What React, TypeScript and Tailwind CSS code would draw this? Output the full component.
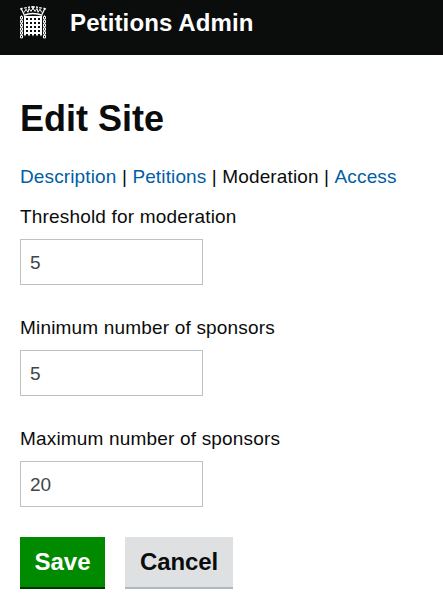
import React, { useState } from "react";

const barXs = [4, 8, 12, 16, 20];
const barYs = [10, 14, 18, 22, 26];
const linkYs = [10, 13.8, 17.6, 21.4, 25.2, 29];

function Portcullis() {
  return (
    <svg className="block h-[33px] w-[27px]" viewBox="0 0 27 33" fill="#fff" aria-hidden="true">
      <g fill="none" stroke="#fff">
        <path d="M3.6 9.2Q13 5.8 22.4 9.2" strokeWidth="1.5" />
        <path d="M4 8.5L1.4 3M22 8.5L24.6 3" strokeWidth="1.3" />
        <path d="M4.2 6.5L6 3.2l2 3.2M8 6.2l1-3.8L11 5.6M11 5.2l2-3 2 3M15 5.6l2-3.2 1 3.8M18 6.4l2-3.2 1.8 3.3" strokeWidth="1" />
        <path d="M0 3.2l2.6-1M26 3.2l-2.6-1M4.2 2.2l2.6-.5M21.8 2.2l-2.6-.5M8 1.3l2-.3M18 1.3l-2-.3M11.2 1h3.6M13 0v3.5" strokeWidth="1.3" />
      </g>
      {barXs.map((x) => (
        <path key={x} d={`M${x} 10h2v18.5l-1 2-1-2z`} />
      ))}
      {barYs.map((y) => (
        <rect key={y} x="4" y={y} width="18" height="2" />
      ))}
      <g fill="none" stroke="#fff" strokeWidth="1">
        {linkYs.map((y) => (
          <path key={y} d={`M.5 ${y + 0.5}h2v2.4h-2zM23.5 ${y + 0.5}h2v2.4h-2zM1.5 ${y - 0.6}v1M24.5 ${y - 0.6}v1`} />
        ))}
      </g>
    </svg>
  );
}

function Field({ label, initial }: { label: string; initial: string }) {
  const [value, setValue] = useState(initial);
  return (
    <label className="mb-[30px] block">
      <span className="block h-[25px] whitespace-nowrap leading-[25px] tracking-[0.18px]">{label}</span>
      <input
        className="mt-[10px] block h-[46px] w-[183px] border border-[#bfc1c3] bg-white px-[9px] pt-[2px] text-[#414549] outline-none"
        value={value}
        onChange={(e) => setValue(e.target.value)}
      />
    </label>
  );
}

export default function App() {
  return (
    <div className="min-h-[612px] bg-white font-['Liberation_Sans',Arial,sans-serif] text-[19px] text-[#0b0c0c]">
      <header className="flex h-[55px] items-start bg-[#0b0c0c] pl-5 pt-[6px]">
        <Portcullis />
        <span className="ml-[23px] mt-[2px] whitespace-nowrap text-[24px] font-bold leading-[30px] tracking-[0.12px] text-white">Petitions Admin</span>
      </header>
      <main className="px-5 pt-[44px]">
        <h1 className="h-10 whitespace-nowrap text-[36px] font-bold leading-10">Edit Site</h1>
        <nav className="mt-[25px] h-[25px] whitespace-nowrap leading-[25px] tracking-[0.13px] [font-kerning:none]">
          <a href="#description" className="text-[#005ea5]">Description</a> |{" "}
          <a href="#petitions" className="text-[#005ea5]">Petitions</a> | Moderation |{" "}
          <a href="#access" className="text-[#005ea5]">Access</a>
        </nav>
        <form className="mt-[15px]" onSubmit={(e) => e.preventDefault()}>
          <Field label="Threshold for moderation" initial="5" />
          <Field label="Minimum number of sponsors" initial="5" />
          <Field label="Maximum number of sponsors" initial="20" />
          <div className="flex gap-5">
            <button type="submit" className="h-[52px] w-[85px] border-b-2 border-[#003600] bg-[#008a00] text-[24px] font-bold text-white">Save</button>
            <button type="button" className="h-[52px] w-[108px] border-b-2 border-[#b0b8bf] bg-[#dee0e2] text-[24px] font-bold tracking-[-0.1px]">Cancel</button>
          </div>
        </form>
      </main>
    </div>
  );
}
